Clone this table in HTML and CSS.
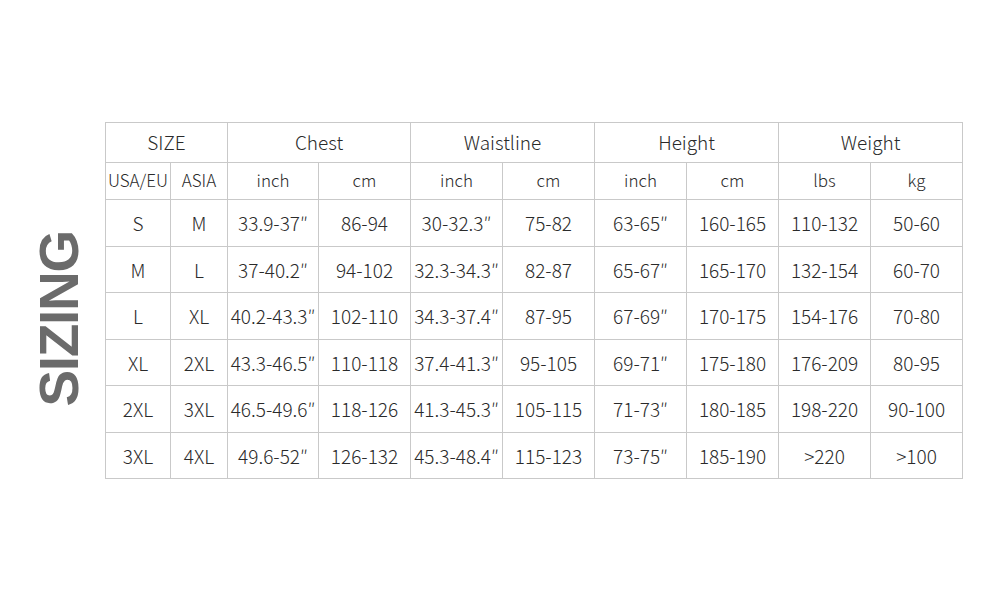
FILE: index.html
```html
<!DOCTYPE html>
<html>
<head>
<meta charset="utf-8">
<link rel="stylesheet" href="styles.css">
</head>
<body>
<div class="page">
  <div class="title-col"><span class="title">SIZING</span></div>
  <table class="chart">
    <colgroup>
      <col class="c-s1"><col class="c-s2">
      <col class="c-m1"><col class="c-m"><col class="c-m"><col class="c-m">
      <col class="c-m"><col class="c-m"><col class="c-m"><col class="c-m">
    </colgroup>
    <tr class="r-head">
      <td colspan="2">SIZE</td><td colspan="2">Chest</td><td colspan="2">Waistline</td><td colspan="2">Height</td><td colspan="2">Weight</td>
    </tr>
    <tr class="r-unit">
      <td>USA/EU</td><td>ASIA</td><td>inch</td><td>cm</td><td>inch</td><td>cm</td><td>inch</td><td>cm</td><td>lbs</td><td>kg</td>
    </tr>
    <tr class="r-a"><td>S</td><td>M</td><td>33.9-37″</td><td>86-94</td><td>30-32.3″</td><td>75-82</td><td>63-65″</td><td>160-165</td><td>110-132</td><td>50-60</td></tr>
    <tr class="r-b"><td>M</td><td>L</td><td>37-40.2″</td><td>94-102</td><td>32.3-34.3″</td><td>82-87</td><td>65-67″</td><td>165-170</td><td>132-154</td><td>60-70</td></tr>
    <tr class="r-a"><td>L</td><td>XL</td><td>40.2-43.3″</td><td>102-110</td><td>34.3-37.4″</td><td>87-95</td><td>67-69″</td><td>170-175</td><td>154-176</td><td>70-80</td></tr>
    <tr class="r-b"><td>XL</td><td>2XL</td><td>43.3-46.5″</td><td>110-118</td><td>37.4-41.3″</td><td>95-105</td><td>69-71″</td><td>175-180</td><td>176-209</td><td>80-95</td></tr>
    <tr class="r-a"><td>2XL</td><td>3XL</td><td>46.5-49.6″</td><td>118-126</td><td>41.3-45.3″</td><td>105-115</td><td>71-73″</td><td>180-185</td><td>198-220</td><td>90-100</td></tr>
    <tr class="r-b"><td>3XL</td><td>4XL</td><td>49.6-52″</td><td>126-132</td><td>45.3-48.4″</td><td>115-123</td><td>73-75″</td><td>185-190</td><td>&gt;220</td><td>&gt;100</td></tr>
  </table>
</div>
</body>
</html>
```

FILE: styles.css
```css
html, body {
  margin: 0;
  padding: 0;
  background: #ffffff;
}
.page {
  width: 1000px;
  height: 600px;
  box-sizing: border-box;
  padding-top: 122px;
  display: flex;
  align-items: flex-start;
}
.title-col {
  width: 105px;
  height: 356px;
  display: flex;
  align-items: center;
  justify-content: center;
  padding-top: 38px;
  padding-left: 13px;
  box-sizing: border-box;
}
.title {
  writing-mode: vertical-rl;
  transform: rotate(180deg);
  font-family: "Liberation Sans", Arial, sans-serif;
  font-weight: 700;
  font-size: 55px;
  line-height: 1;
  letter-spacing: -1.3px;
  color: #6b6b6b;
}
.chart {
  border-collapse: collapse;
  table-layout: fixed;
  width: 857px;
  font-family: "Noto Sans CJK SC", "Noto Sans", sans-serif;
  font-weight: 300;
  font-size: 19px;
  color: #2a2a2a;
}
.chart td {
  border: 1px solid #c9c9c9;
  padding: 0 0 1px 0;
  text-align: center;
  vertical-align: middle;
  white-space: nowrap;
  overflow: hidden;
}
.c-s1 { width: 65px; }
.c-s2 { width: 57px; }
.c-m1 { width: 91px; }
.c-m { width: 92px; }
.r-head td { height: 37px; padding-bottom: 2px; }
.r-unit td { height: 32px; padding-bottom: 4px; font-size: 17px; }
.r-a td { height: 45px; }
.r-b td { height: 44px; }
```
